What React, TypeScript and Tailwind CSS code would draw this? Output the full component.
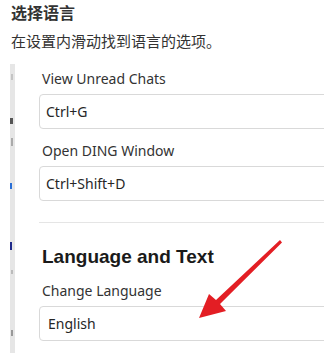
import React from 'react';

const latin = "font-['Noto_Sans','Noto_Sans_CJK_SC',sans-serif]";

const Field: React.FC<{ label: string; value: string; className?: string; pad?: string }> = ({ label, value, className, pad }) => (
  <div className={className}>
    <div className="text-[14px] leading-5 text-[#333] pl-[3px] mb-[5px]">{label}</div>
    <div className={`h-[35px] w-[320px] border border-[#d9d9d9] rounded-[4px] flex items-center text-[14px] text-[#262626] ${pad ?? 'pl-[6px]'}`}>
      {value}
    </div>
  </div>
);

// clipped edge of the neighbouring panel, with bits of cut-off text
const Strip = () => (
  <div className="shrink-0 ml-[10px] w-[5px] h-[290px] bg-[#e6e6e6] flex flex-col items-start">
    <span className="mt-[10px] ml-px w-[2px] h-[6px] bg-[#c4c4c4]" />
    <span className="mt-[38px] w-[3px] h-[6px] bg-[#555]" />
    <span className="mt-[14px] ml-px w-[2px] h-[8px] bg-[#aaa]" />
    <span className="mt-[37px] w-[2px] h-[6px] bg-[#2a6fd6]" />
    <span className="mt-[53px] w-[2px] h-[8px] bg-[#1f2a8a]" />
    <span className="mt-[20px] ml-px w-[2px] h-[4px] bg-[#bbb]" />
    <span className="mt-[56px] ml-px w-[2px] h-[6px] bg-[#999]" />
  </div>
);

export default function App() {
  return (
    <div className={`relative w-[324px] h-[353px] bg-white overflow-hidden ${latin}`}>
      {/* header */}
      <div className="px-[11px] font-['Noto_Sans_CJK_SC',sans-serif] text-[#333]">
        <div className="text-[16px] leading-6 font-semibold">选择语言</div>
        <div className="text-[15px] leading-[22px] mt-[6px]">在设置内滑动找到语言的选项。</div>
      </div>

      {/* cropped settings panel */}
      <div className="flex mt-[12px]">
        <Strip />
        <div className="ml-[24px] w-[320px] shrink-0">
          <Field className="pt-[5px]" label="View Unread Chats" value="Ctrl+G" />
          <Field className="pt-[12px]" label="Open DING Window" value="Ctrl+Shift+D" />
          <div className="mt-[21px] h-px bg-[#e5e5e5]" />
          <div className="mt-[22px] pl-[3px] text-[19px] leading-6 font-bold text-[#1a1a1a] font-['Liberation_Sans',Arial,sans-serif]">
            Language and Text
          </div>
          <Field className="pt-[12px]" label="Change Language" value="English" pad="pl-[8px]" />
        </div>
      </div>

      {/* annotation arrow */}
      <svg className="absolute left-0 top-0 pointer-events-none" width="324" height="353" viewBox="0 0 324 353">
        <polygon
          points="280,240 282,242.5 220,304 226,311 199,318 209,294 216,300"
          fill="#e31e24"
        />
      </svg>
    </div>
  );
}
